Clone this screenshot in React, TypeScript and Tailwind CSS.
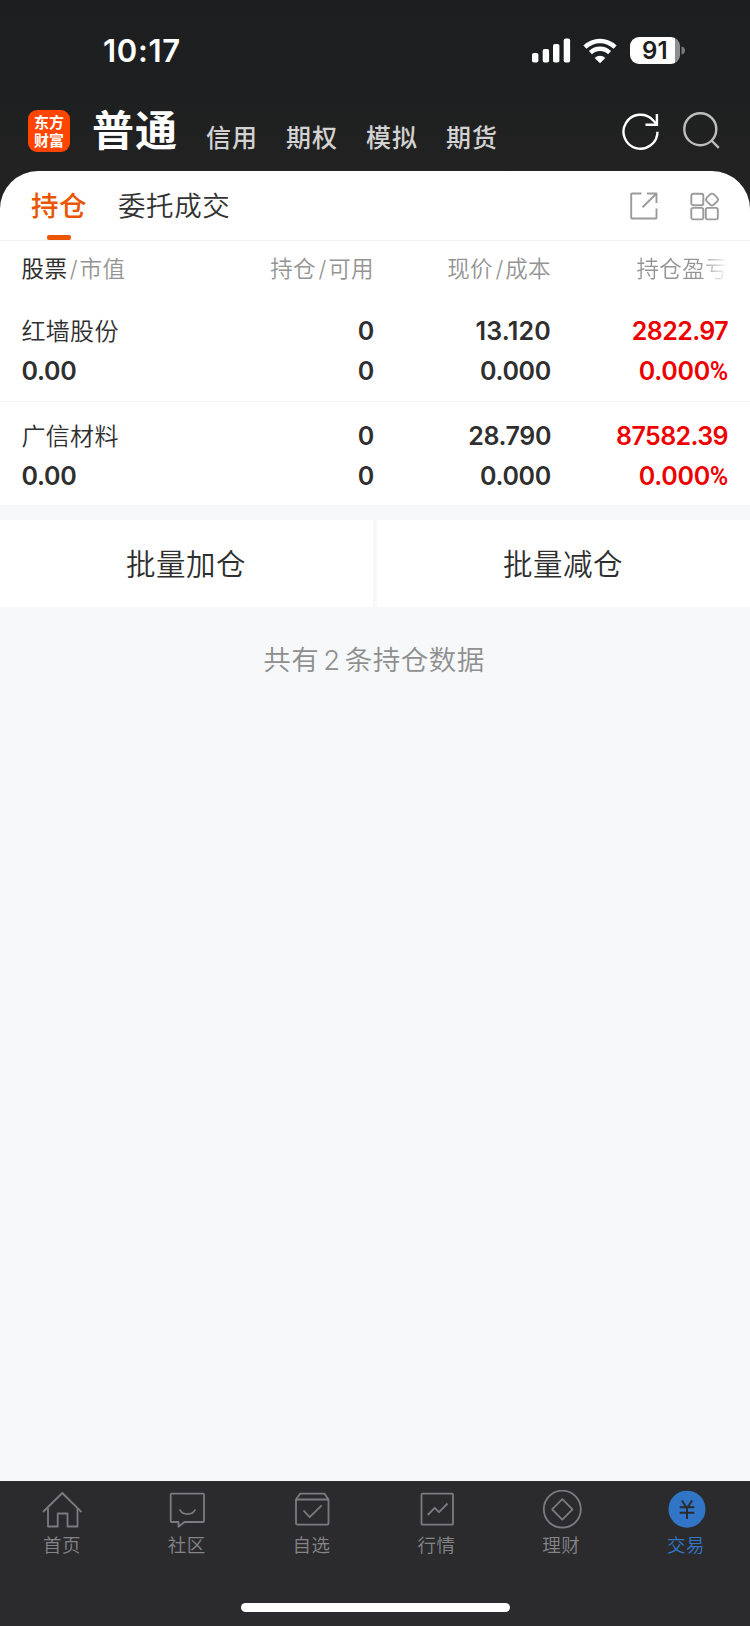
import type { ReactNode } from "react";

const markets = ["信用", "期权", "模拟", "期货"];

const holdings = [
  { name: "红墙股份", value: "0.00", held: "0", usable: "0", price: "13.120", priceSpacing: "tracking-[0.200px]", cost: "0.000", profit: "2822.97", rate: "0.000%" },
  { name: "广信材料", value: "0.00", held: "0", usable: "0", price: "28.790", priceSpacing: "tracking-[-0.400px]", cost: "0.000", profit: "87582.39", rate: "0.000%" },
];

function StatusBar() {
  return (
    <div className="flex h-[100px] items-center justify-between pr-[64px] pl-[103px]">
      <div className="mt-[2px] text-[31px] leading-[40px] font-semibold tracking-[0.700px] text-white">10:17</div>
      <div className="mt-[1px] flex items-center">
        <svg className="h-[26px] w-[40px]" viewBox="0 0 40 26" fill="#fff">
          <rect x="1" y="15" width="6.400" height="9.500" rx="1.800" />
          <rect x="11.700" y="11" width="6.400" height="13.500" rx="1.800" />
          <rect x="22" y="6" width="6.400" height="18.500" rx="1.800" />
          <rect x="32.700" y="0.500" width="6.400" height="24" rx="1.800" />
        </svg>
        <svg className="ml-[12px] h-[26px] w-[34px]" viewBox="0 0 34 26" fill="none" stroke="#fff" strokeWidth="4.400">
          <path d="M1.900 9.200C10.500 .9 23.500 .9 32.100 9.200" />
          <path d="M7.400 14.700C13 9.500 21 9.500 26.600 14.700" />
          <path d="M17 25.200L11.700 19.900C14.800 17.100 19.200 17.100 22.300 19.900Z" fill="#fff" stroke="none" />
        </svg>
        <div className="ml-[13px] flex h-[27px] w-[50px] items-center justify-center rounded-[9px] bg-[linear-gradient(90deg,#fff_45px,#8d8e8f_45px)]">
          <span className="text-[24px] leading-[27px] font-semibold tracking-[0.300px] text-[#1c1e20]">91</span>
        </div>
        <svg className="ml-[1px] h-[9px] w-[5px]" viewBox="0 0 5 9" fill="#7b7c7d">
          <path d="M0.500 0.500C3 1 4 2.600 4 4.500S3 8 .5 8.500Z" />
        </svg>
      </div>
    </div>
  );
}

function Header() {
  return (
    <header className="flex h-[71px] items-start pr-[30px] pl-[28px]">
      <div className="mt-[10px] h-[42px] w-[42px] rounded-[9px] bg-[#ff4500] pt-[3px] text-center font-['Noto_Sans_CJK_SC',sans-serif] text-[15px] leading-[17.500px] font-bold text-white">
        东方
        <br />
        财富
      </div>
      <h1 className="mt-[1px] ml-[22px] text-[42px] leading-[60px] font-semibold tracking-[1px] text-white">普通</h1>
      <nav className="mt-[16px] ml-[28px] flex gap-[28px] text-[25px] leading-[44px] font-medium tracking-[1px] text-[#d2d2d2]">
        {markets.map((m) => (
          <span key={m}>{m}</span>
        ))}
      </nav>
      <svg className="mt-[12px] ml-auto h-[38px] w-[38px]" viewBox="0 0 38 38" fill="none" stroke="#fff" strokeWidth="2.400">
        <path d="M35.500 19.800A17 17 0 1 1 31 8.200L34.800 12.300" />
        <path d="M34.900 2V12.700H23.500" />
      </svg>
      <svg className="mt-[12px] ml-[22px] h-[39px] w-[38px]" viewBox="0 0 38 39" fill="none" stroke="#bdbdbd" strokeWidth="2.400">
        <circle cx="18.300" cy="17.200" r="16" />
        <path d="M29.500 28.500L36.800 35.800" />
      </svg>
    </header>
  );
}

function Tabs() {
  return (
    <div className="flex h-[70px] items-start border-b border-[#f0f1f2] pr-[30px] pl-[31px]">
      <div className="flex flex-col items-center">
        <span className="mt-[12px] h-[52px] text-[27.500px] leading-[46px] font-medium tracking-[0.500px] text-[#ea5504]">持仓</span>
        <span className="mr-[1px] h-[5px] w-[24px] rounded-[2px] bg-[#ea5504]" />
      </div>
      <span className="mt-[12px] ml-[31px] text-[27.500px] leading-[46px] font-[350] tracking-[0.600px] text-[#333]">委托成交</span>
      <svg className="mt-[21px] ml-auto h-[28px] w-[28px]" viewBox="0 0 28 28" fill="none" stroke="#9b9b9b" strokeWidth="1.900" strokeLinejoin="round">
        <path d="M11.500 1.500H2Q1.200 1.500 1.200 2.300V25.700Q1.200 26.500 2 26.500H25.700Q26.500 26.500 26.500 25.700V16.500" />
        <path d="M17 1.500H26.500V11M26.500 1.500L12.500 15.300" />
      </svg>
      <svg className="mt-[21px] ml-[32px] h-[29px] w-[30px]" viewBox="0 0 30 29" fill="none" stroke="#9b9b9b" strokeWidth="1.900">
        <rect x="1.300" y="1.700" width="12" height="11.500" rx="1.800" />
        <rect x="1.300" y="15.900" width="12" height="11.500" rx="1.800" />
        <rect x="15.800" y="15.900" width="12" height="11.500" rx="1.800" />
        <rect x="17" y="2.500" width="10" height="10" rx="3" transform="rotate(45 22 7.500)" />
      </svg>
    </div>
  );
}

const cols = "grid grid-cols-[175.500px_177px_177px_177px] pl-[21.500px] pr-[22px]";

function Slash() {
  return <span className="mr-[1.500px] ml-[2.500px]">/</span>;
}

function Heading() {
  return (
    <div className={`${cols} h-[56px] pt-[8px] text-right text-[22.500px] leading-[40px] font-[350] tracking-[0.400px] text-[#949494]`}>
      <span className="text-left">
        <span className="font-normal text-[#2f2f2f]">股票</span>
        <Slash />
        市值
      </span>
      <span>持仓<Slash />可用</span>
      <span>现价<Slash />成本</span>
      <span className="bg-[linear-gradient(90deg,#949494_148px,#ffffff_178px)] bg-clip-text text-transparent">持仓盈亏</span>
    </div>
  );
}

function Figure({ value, spacing }: { value: string; spacing: string }) {
  const percent = value.endsWith("%");
  return (
    <span className={spacing}>
      {percent ? value.slice(0, -1) : value}
      {percent && <span className="font-[Roboto,sans-serif]">%</span>}
    </span>
  );
}

function Cell({ top, bottom, spacing = "tracking-[-0.300px]", red }: { top: string; bottom: string; spacing?: string; red?: boolean }) {
  return (
    <div className={`flex flex-col gap-[1px] text-right text-[25px] leading-[39px] font-[560] ${red ? "text-[#ef0000]" : "text-[#2f2f2f]"}`}>
      <Figure value={top} spacing={spacing} />
      <Figure value={bottom} spacing="tracking-[-0.300px]" />
    </div>
  );
}

function Holdings() {
  return (
    <div>
      {holdings.map((h, i) => (
        <div key={h.name} className={`${cols} border-b border-[#f4f5f6] pt-[15px] ${i === 0 ? "h-[105px]" : "h-[104px]"}`}>
          <div className="flex flex-col gap-[1px] leading-[39px] text-[#2f2f2f]">
            <span className="text-[24px] font-[350] tracking-[0.300px]">{h.name}</span>
            <span className="text-[25px] font-[560] tracking-[-0.300px]">{h.value}</span>
          </div>
          <Cell top={h.held} bottom={h.usable} />
          <Cell top={h.price} bottom={h.cost} spacing={h.priceSpacing} />
          <Cell top={h.profit} bottom={h.rate} spacing="tracking-[-0.600px]" red />
        </div>
      ))}
    </div>
  );
}

function TabIcon({ children }: { children: ReactNode }) {
  return (
    <svg className="h-[40px] w-[40px]" viewBox="0 0 40 40" fill="none" stroke="#7c7c80" strokeWidth="1.800" strokeLinejoin="round">
      {children}
    </svg>
  );
}

const tabs = [
  {
    label: "首页",
    icon: (
      <>
        <path d="M1 22L20.300 3L39.500 22" />
        <path d="M6 18V36.500H15.700V23.500H25.500V36.500H35.500V18" />
      </>
    ),
  },
  {
    label: "社区",
    icon: (
      <>
        <path d="M4.500 3.700H36Q37 3.700 37 4.700V31Q37 32 36 32H17.500L11.500 36.700V32H4.500Q3.700 32 3.700 31V4.700Q3.700 3.700 4.500 3.700Z" />
        <path d="M12.700 19.500C15.500 25.700 25.500 25.700 28.300 19.500" />
      </>
    ),
  },
  {
    label: "自选",
    icon: (
      <>
        <path d="M4 9.500L8 3.700H32.500L36.500 9.500V33Q36.500 34.700 35 34.700H5.500Q4 34.700 4 33ZM4 9.500H36.500" />
        <path d="M11.500 20.500L17.700 27.200L29.700 15.300" />
      </>
    ),
  },
  {
    label: "行情",
    icon: (
      <>
        <rect x="4.500" y="3.700" width="31.500" height="31" rx="1" />
        <path d="M10.700 25L17.700 17.800L22 22.200L30.500 13.500" />
      </>
    ),
  },
  {
    label: "理财",
    icon: (
      <>
        <circle cx="20.300" cy="19.200" r="18.500" />
        <path d="M20.300 9.200L30.500 19.400L20.300 29.600L10.100 19.400Z" />
      </>
    ),
  },
  {
    label: "交易",
    active: true,
    icon: (
      <>
        <circle cx="20" cy="19.200" r="18.500" fill="#3176c6" stroke="none" />
        <path d="M14.800 10.500L20 18L25.200 10.500M12.700 17.200H27.300M12.700 22.700H27.300M20 17V29" stroke="#2b2b2d" strokeWidth="1.900" strokeLinejoin="miter" />
      </>
    ),
  },
];

export default function App() {
  return (
    <div className="flex h-[1626px] w-[750px] flex-col overflow-hidden bg-[#f6f8fa] font-['Inter','Noto_Sans_CJK_SC',sans-serif]">
      <div className="bg-[linear-gradient(180deg,#1c1e20_0px,#1e1f20_90px,#222222_171px)]">
        <StatusBar />
        <Header />
        <div className="rounded-t-[38px] bg-white">
          <Tabs />
        </div>
      </div>
      <section className="h-[265px] bg-white">
        <Heading />
        <Holdings />
      </section>
      <div className="mt-[14px] flex h-[87px] gap-[4px] text-[29.500px] font-[350] tracking-[0.500px] text-[#2f2f2f]">
        <button className="w-[373px] bg-white pt-[1px] pr-[1px]">批量加仓</button>
        <button className="w-[373px] bg-white pt-[1px] pr-[1px]">批量减仓</button>
      </div>
      <p className="mt-[32px] pr-[2px] text-center text-[27.500px] leading-[42px] font-[350] tracking-[0.500px] text-[#8f8f8f]">
        共有<span className="mx-[4px] text-[27.500px]">2</span>条持仓数据
      </p>
      <footer className="mt-auto flex h-[145px] flex-col items-center bg-[#2b2b2d]">
        <nav className="grid w-full grid-cols-6 pt-[9px] pr-[1px]">
          {tabs.map((t) => (
            <div key={t.label} className="flex flex-col items-center">
              <TabIcon>{t.icon}</TabIcon>
              <span className={`pr-[1px] text-[18.500px] leading-[30px] font-[350] tracking-[0.500px] ${t.active ? "text-[#3176c6]" : "text-[#858589]"}`}>{t.label}</span>
            </div>
          ))}
        </nav>
        <div className="mt-auto mb-[14px] h-[9px] w-[269px] rounded-full bg-white" />
      </footer>
    </div>
  );
}
